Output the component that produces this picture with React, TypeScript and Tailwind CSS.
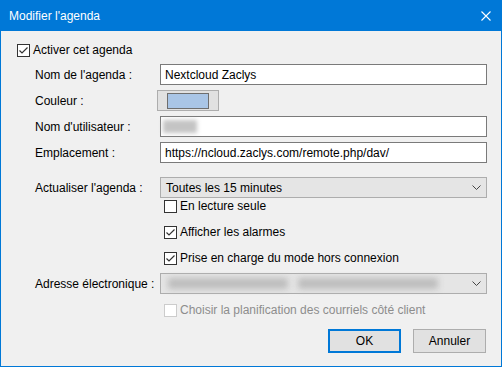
import React from "react";

function Check({ checked, disabled }: { checked?: boolean; disabled?: boolean }) {
  return (
    <span
      className={`flex h-[13px] w-[13px] shrink-0 items-center justify-center border bg-white ${
        disabled ? "border-[#cccccc]" : "border-[#333333]"
      }`}
    >
      {checked && (
        <svg width="11" height="11" viewBox="0 0 11 11">
          <path d="M1.5 5.5 L4 8 L9.5 2.5" fill="none" stroke="#333333" strokeWidth="1.2" />
        </svg>
      )}
    </span>
  );
}

function CheckRow({ label, checked, disabled, className }: { label: string; checked?: boolean; disabled?: boolean; className?: string }) {
  return (
    <label className={`flex h-4 items-center gap-[3px] ${disabled ? "text-[#8d8d8d]" : "text-black"} ${className ?? ""}`}>
      <Check checked={checked} disabled={disabled} />
      <span>{label}</span>
    </label>
  );
}

function Chevron() {
  return (
    <svg width="9" height="6" viewBox="0 0 9 6" className="mr-[3px]">
      <path d="M0.5 0.5 L4.5 4.5 L8.5 0.5" fill="none" stroke="#444444" strokeWidth="1" />
    </svg>
  );
}

function FieldRow({ label, children, className }: { label: string; children: React.ReactNode; className?: string }) {
  return (
    <div className={`flex h-[21px] items-center ${className ?? ""}`}>
      <span className="w-[143px] shrink-0 whitespace-nowrap pl-[18px]">{label}</span>
      {children}
    </div>
  );
}

export default function App() {
  return (
    <div
      className="flex h-[367px] w-[502px] flex-col border border-t-0 border-[#0078d7] bg-[#f0f0f0] text-[12px] text-black"
      style={{ fontFamily: '"Liberation Sans", Arial, sans-serif' }}
    >
      <div className="flex h-[31px] shrink-0 items-center justify-between bg-[#0078d7] pl-[8px] pr-[10px] text-white">
        <span>Modifier l'agenda</span>
        <svg width="10" height="10" viewBox="0 0 10 10">
          <path d="M0.5 0.5 L9.5 9.5 M9.5 0.5 L0.5 9.5" stroke="white" strokeWidth="1.1" />
        </svg>
      </div>

      <div className="flex flex-col pl-[16px] pr-[14px]">
        <label className="mt-[11px] flex h-4 items-center gap-[3px]">
          <Check checked />
          <span>Activer cet agenda</span>
        </label>

        <FieldRow label="Nom de l'agenda :" className="mt-[6px]">
          <div className="flex h-[21px] w-[327px] items-center border border-[#7a7a7a] bg-white px-[4px]">
            Nextcloud Zaclys
          </div>
        </FieldRow>

        <FieldRow label="Couleur :" className="mt-[5px]">
          <button className="-ml-[3px] flex h-[21px] w-[62px] items-center justify-center border border-[#adadad] bg-[#e1e1e1]">
            <span className="h-[16px] w-[42px] border border-[#6e6e6e] bg-[#a9c5e6]" />
          </button>
        </FieldRow>

        <FieldRow label="Nom d'utilisateur :" className="mt-[5px]">
          <div className="flex h-[21px] w-[327px] items-center border border-[#7a7a7a] bg-white px-[2px]">
            <span className="h-[13px] w-[34px] bg-[#c4c4c4] blur-[2px]" />
          </div>
        </FieldRow>

        <FieldRow label="Emplacement :" className="mt-[5px]">
          <div className="flex h-[21px] w-[327px] items-center border border-[#7a7a7a] bg-white px-[4px]">
            https://ncloud.zaclys.com/remote.php/dav/
          </div>
        </FieldRow>

        <FieldRow label="Actualiser l'agenda :" className="mt-[14px]">
          <div className="flex h-[21px] w-[327px] items-center justify-between border border-[#adadad] bg-[#e5e5e5] pl-[5px] pr-[2px]">
            <span>Toutes les 15 minutes</span>
            <Chevron />
          </div>
        </FieldRow>

        <div className="flex flex-col gap-[10px] pl-[147px]">
          <CheckRow label="En lecture seule" />
          <CheckRow label="Afficher les alarmes" checked />
          <CheckRow label="Prise en charge du mode hors connexion" checked />
        </div>

        <FieldRow label="Adresse électronique :" className="mt-[7px]">
          <div className="flex h-[21px] w-[327px] items-center justify-between border border-[#adadad] bg-[#e5e5e5] pl-[7px] pr-[2px]">
            <div className="flex items-center gap-[10px]">
              <span className="h-[11px] w-[120px] bg-[#bdbdbd] blur-[3px]" />
              <span className="h-[11px] w-[140px] bg-[#bdbdbd] blur-[3px]" />
            </div>
            <Chevron />
          </div>
        </FieldRow>

        <CheckRow label="Choisir la planification des courriels côté client" disabled className="mt-[8px] ml-[147px]" />

        <div className="mt-[11px] flex justify-end gap-[12px] pr-[1px]">
          <button className="h-[24px] w-[73px] border-2 border-[#0078d7] bg-[#e1e1e1]">OK</button>
          <button className="h-[24px] w-[73px] border border-[#adadad] bg-[#e1e1e1]">Annuler</button>
        </div>
      </div>
    </div>
  );
}
